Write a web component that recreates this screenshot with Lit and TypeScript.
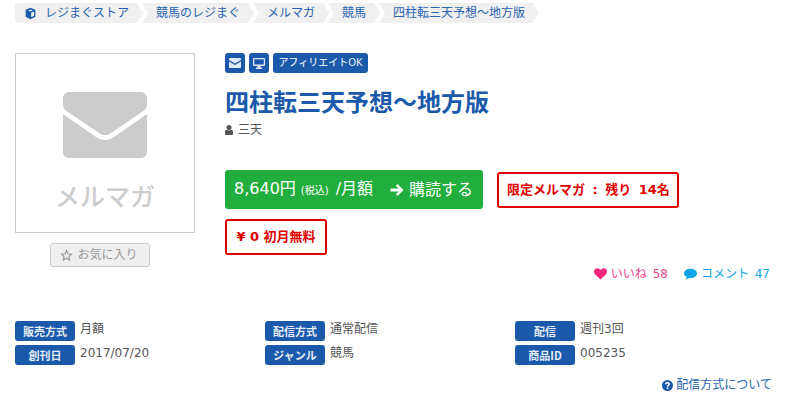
import { LitElement, html, css } from "lit";
import { customElement } from "lit/decorators.js";

const crumbs = ["競馬のレジまぐ", "メルマガ", "競馬", "四柱転三天予想～地方版"];
const info = [
  ["販売方式", "月額"], ["配信方式", "通常配信"], ["配信", "週刊3回"],
  ["創刊日", "2017/07/20"], ["ジャンル", "競馬"], ["商品ID", "005235"],
];

@customElement("app-root")
export class AppRoot extends LitElement {
  static styles = css`
    :host { display: block; width: 797px; height: 400px; overflow: hidden; background: #fff; color: #555;
      font-family: "DejaVu Sans", "Noto Sans CJK JP", sans-serif; font-size: 12px; line-height: 20px; }
    .crumbs { display: flex; height: 20px; margin: 3px 0 0 15px; color: #2a64ae; }
    .crumb { background: #f0f0f0; padding: 0 14px 0 14px; margin-right: -1px; white-space: nowrap;
      clip-path: polygon(0 0, calc(100% - 6px) 0, 100% 50%, calc(100% - 6px) 100%, 0 100%, 6px 50%); display: flex; align-items: center; }
    .crumb.first { border-radius: 3px 0 0 3px; padding-left: 9px; padding-right: 14px; gap: 8px;
      clip-path: polygon(0 0, calc(100% - 6px) 0, 100% 50%, calc(100% - 6px) 100%, 0 100%); }
    .main { display: flex; margin: 30px 0 0 15px; }
    .left { width: 180px; display: flex; flex-direction: column; align-items: flex-start; }
    .thumb { box-sizing: border-box; width: 180px; height: 180px; border: 1px solid #ccc; display: flex; flex-direction: column; align-items: center; color: #ccc; }
    .thumb svg { margin-top: 38px; display: block; }
    .thumb span { font-size: 25px; line-height: 36px; margin-top: 22px; font-weight: 500; }
    .fav { box-sizing: border-box; width: 100px; height: 24px; margin: 10px 0 0 35px; padding-right: 2px; border: 1px solid #ccc; border-radius: 3px; background: #efefef; color: #999; display: flex; align-items: center; justify-content: center; gap: 4px; }
    .right { margin-left: 30px; flex: 1; }
    .badges { display: flex; gap: 4px; }
    .badge { height: 20px; min-width: 20px; box-sizing: border-box; border-radius: 3px; background: #1b5aaa; color: #dfe8f4; display: flex; align-items: center; justify-content: center; font-size: 10px; font-weight: 500; }
    .badge.text { width: 95px; }
    h1 { margin: 15px 0 0; font-size: 24px; line-height: 30px; font-weight: 700; color: #1b5aaa; }
    .author { display: flex; align-items: center; gap: 5px; margin-top: 2px; height: 20px; }
    .buy-row { display: flex; align-items: center; gap: 14px; margin-top: 30px; }
    .buy { width: 258px; height: 39px; box-sizing: border-box; padding: 0 10px 0 9px; border-radius: 3px; background: #22ae3c; color: #fff; font-size: 16px; display: flex; align-items: center; justify-content: space-between; }
    .buy small { font-size: 10px; margin: 0 7px 0 5px; }
    .buy .go { display: flex; align-items: center; gap: 5px; }
    .box { box-sizing: border-box; height: 36px; display: inline-flex; align-items: center; padding: 0 8px; border: 2px solid #e00000; border-radius: 3px; color: #e00000; font-weight: 700; font-size: 13px; }
    .limit { width: 182px; word-spacing: 3px; white-space: pre; }
    .free { margin-top: 10px; width: 102px; justify-content: center; padding: 0; }
    .social { display: flex; justify-content: flex-end; gap: 16px; margin: 9px 27px 0 0; height: 20px; word-spacing: 2px; }
    .social span { display: flex; align-items: center; gap: 4px; }
    .like { color: #f0438f; }
    .comment { color: #12a5e8; }
    .table { display: grid; grid-template-columns: repeat(3, 250px); row-gap: 4px; margin: 37px 0 0 15px; }
    .cell { display: flex; align-items: flex-start; gap: 5px; height: 20px; }
    .cell span { line-height: 16px; }
    .label { width: 60px; height: 20px; border-radius: 3px; background: #1b5aaa; color: #e6edf6; font-family: "Noto Sans CJK JP", sans-serif; font-size: 11px; font-weight: 700; display: flex; align-items: center; justify-content: center; }
    .help { display: flex; justify-content: flex-end; align-items: center; gap: 3px; margin: 10px 25px 0 0; color: #2a64ae; height: 20px; }
  `;

  render() {
    return html`
      <nav class="crumbs">
        <div class="crumb first">
          <svg width="13" height="13" viewBox="0 0 16 16"><path fill="#1b5aaa" d="M8 1 14 3.5V12L8 15 2 12V3.5ZM8 3 5 4.3 8 5.6 11 4.3ZM8.8 7V12.6L12.4 10.9V5.5Z"/></svg>
          <span>レジまぐストア</span>
        </div>
        ${crumbs.map((c) => html`<div class="crumb">${c}</div>`)}
      </nav>
      <div class="main">
        <div class="left">
          <div class="thumb">
            <svg width="84" height="66" viewBox="0 0 84 66"><path fill="#ccc" d="M6 0H78A6 6 0 0 1 84 6V13C84 16 82 18 79 20L48 41C44 44 40 44 36 41L5 20C2 18 0 16 0 13V6A6 6 0 0 1 6 0Z"/><path fill="#ccc" d="M0 22 33 45C39 49 45 49 51 45L84 22V60A6 6 0 0 1 78 66H6A6 6 0 0 1 0 60Z"/></svg>
            <span>メルマガ</span>
          </div>
          <div class="fav">
            <svg width="13" height="13" viewBox="0 0 16 16"><path fill="none" stroke="#999" stroke-width="1.4" d="M8 1.8 9.8 5.8 14.2 6.3 11 9.2 11.9 13.6 8 11.4 4.1 13.6 5 9.2 1.8 6.3 6.2 5.8Z"/></svg>
            <span>お気に入り</span>
          </div>
        </div>
        <div class="right">
          <div class="badges">
            <div class="badge"><svg width="12" height="10" viewBox="0 0 12 10"><path fill="#dfe8f4" d="M1 0H11A1 1 0 0 1 12 1V2L6 5.6 0 2V1A1 1 0 0 1 1 0ZM0 3.4 6 7 12 3.4V9A1 1 0 0 1 11 10H1A1 1 0 0 1 0 9Z"/></svg></div>
            <div class="badge"><svg width="12" height="11" viewBox="0 0 12 11"><path fill="#dfe8f4" d="M1 0H11A1 1 0 0 1 12 1V7A1 1 0 0 1 11 8H7.5V9.5H9V11H3V9.5H4.5V8H1A1 1 0 0 1 0 7V1A1 1 0 0 1 1 0ZM1.2 1.2V6.4H10.8V1.2Z"/></svg></div>
            <div class="badge text">アフィリエイトOK</div>
          </div>
          <h1>四柱転三天予想～地方版</h1>
          <div class="author">
            <svg width="8" height="10" viewBox="0 0 8 10"><circle cx="4" cy="2.6" r="2.5" fill="#555"/><path fill="#555" d="M0 9V7C0 5.6 1 4.8 2 4.8 3.2 5.8 4.8 5.8 6 4.8 7 4.8 8 5.6 8 7V9A1 1 0 0 1 7 10H1A1 1 0 0 1 0 9Z"/></svg>
            <span>三天</span>
          </div>
          <div class="buy-row">
            <div class="buy">
              <span>8,640円<small>(税込)</small>/月額</span>
              <span class="go">
                <svg width="14" height="14" viewBox="0 0 14 14"><path fill="#fff" d="M7.5 1 13.5 7 7.5 13 5.8 11.3 8.7 8.4H.5V5.6H8.7L5.8 2.7Z"/></svg>
                <span>購読する</span>
              </span>
            </div>
            <div class="box limit">限定メルマガ : 残り 14名</div>
          </div>
          <div class="box free">¥ 0 初月無料</div>
          <div class="social">
            <span class="like">
              <svg width="13" height="12" viewBox="0 0 13 12"><path fill="#f5277f" d="M6.5 11.6 1.2 6.4C-.4 4.8-.4 2.5 1 1.1 2.4-.3 4.6-.2 6.5 1.8 8.4-.2 10.6-.3 12 1.1 13.4 2.5 13.4 4.8 11.8 6.4Z"/></svg>
              いいね 58
            </span>
            <span class="comment">
              <svg width="13" height="12" viewBox="0 0 13 12"><path fill="#12a5e8" d="M6.5 .8C10.1 .8 13 2.8 13 5.4S10.1 10 6.5 10C6 10 5.5 10 5 9.9 4 10.8 2.8 11.3 1.4 11.5 2.2 10.7 2.7 9.9 2.8 9.1 1.1 8.3 0 6.9 0 5.4 0 2.8 2.9 .8 6.5 .8Z"/></svg>
              コメント 47
            </span>
          </div>
        </div>
      </div>
      <div class="table">
        ${info.map(([k, v]) => html`<div class="cell"><div class="label">${k}</div><span>${v}</span></div>`)}
      </div>
      <div class="help">
        <svg width="11" height="11" viewBox="0 0 11 11"><circle cx="5.5" cy="5.5" r="5.5" fill="#1b5aaa"/><path fill="none" stroke="#fff" stroke-width="1.5" d="M3.7 4.3C3.8 3.2 4.5 2.7 5.5 2.7 6.6 2.7 7.3 3.3 7.3 4.1 7.3 5.3 5.5 5.3 5.5 6.7"/><rect x="4.7" y="7.5" width="1.6" height="1.5" fill="#fff"/></svg>
        <span>配信方式について</span>
      </div>
    `;
  }
}
